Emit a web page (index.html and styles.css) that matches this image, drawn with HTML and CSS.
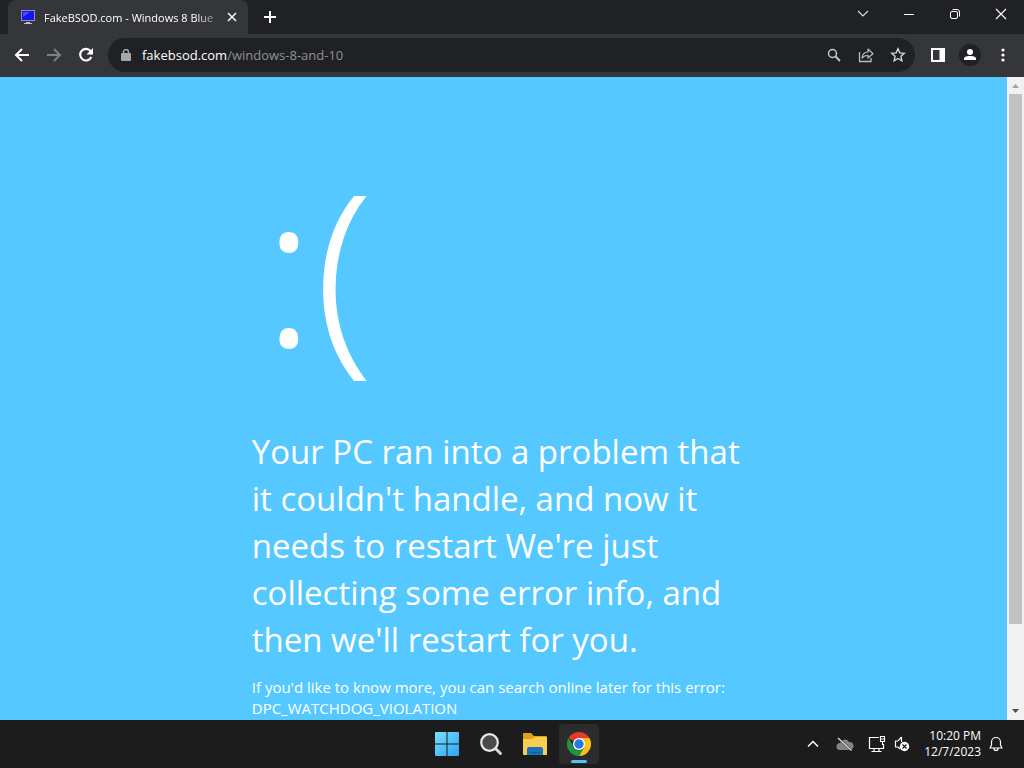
FILE: index.html
```
<!DOCTYPE html>
<html lang="en">
<head>
<meta charset="utf-8">
<meta name="viewport" content="width=device-width, initial-scale=1">
<title>FakeBSOD.com - Windows 8 Blue Screen</title>
<link rel="stylesheet" href="styles.css">
</head>
<body>
<header class="browser">
  <div class="tabstrip">
    <div class="tab">
      <svg class="favicon" width="16" height="16" viewBox="0 0 16 16"><rect x="1" y="1" width="14" height="11" fill="#8d8dd0"/><rect x="2" y="2" width="12" height="9" fill="#1616e8"/><path d="M3 3h7L3 8z" fill="#4a4af5"/><path d="M6 13h4v1h2v1H4v-1h2z" fill="#c4c4c4"/></svg>
      <span class="tab-title">FakeBSOD.com - Windows 8 Blue</span>
      <button class="tab-close" aria-label="Close tab"><svg width="10" height="10" viewBox="0 0 10 10"><path d="M1 1l8 8M9 1L1 9" stroke="#f1f3f4" stroke-width="1.6"/></svg></button>
    </div>
    <button class="new-tab" aria-label="New tab"><svg width="14" height="14" viewBox="0 0 14 14"><path d="M7 1v12M1 7h12" stroke="#fff" stroke-width="2"/></svg></button>
    <div class="window-controls">
      <button aria-label="Search tabs"><svg width="12" height="8" viewBox="0 0 12 8"><path d="M1 1l5 5 5-5" fill="none" stroke="#e2e2e2" stroke-width="1.1"/></svg></button>
      <button aria-label="Minimize"><svg width="12" height="12" viewBox="0 0 12 12"><path d="M1 6.500h10" stroke="#fff"/></svg></button>
      <button aria-label="Restore"><svg width="12" height="12" viewBox="0 0 12 12"><rect x="1.500" y="3.500" width="7" height="7" rx="1.500" fill="none" stroke="#fff"/><path d="M3.500 1.500h4.500a2.500 2.500 0 0 1 2.500 2.500v4.500" fill="none" stroke="#fff"/></svg></button>
      <button aria-label="Close"><svg width="12" height="12" viewBox="0 0 12 12"><path d="M1 1l10 10M11 1L1 11" stroke="#fff" stroke-width="1.1"/></svg></button>
    </div>
  </div>
  <div class="toolbar">
    <nav class="nav-buttons">
      <button aria-label="Back"><svg width="16" height="16" viewBox="0 0 16 16"><path d="M8 2L2 8l6 6M2 8h13" fill="none" stroke="#fff" stroke-width="2"/></svg></button>
      <button aria-label="Forward" disabled><svg width="16" height="16" viewBox="0 0 16 16"><path d="M8 2l6 6-6 6M14 8H1" fill="none" stroke="#7d7f82" stroke-width="2"/></svg></button>
      <button aria-label="Reload"><svg width="16" height="16" viewBox="0 0 16 16"><path d="M13.300 10A5.800 5.800 0 1 1 12.500 4" fill="none" stroke="#fff" stroke-width="2.100"/><path d="M15 1v6.500H8.500z" fill="#fff"/></svg></button>
    </nav>
    <div class="omnibox">
      <svg class="lock" width="10" height="12" viewBox="0 0 10 12"><rect x="0" y="4" width="10" height="8" rx="1" fill="#a4a6a9"/><path d="M2.500 5V3a2.500 2.500 0 0 1 5 0v2" fill="none" stroke="#a4a6a9" stroke-width="1.400"/></svg>
      <a class="url" href="#"><span class="host">fakebsod.com</span>/windows-8-and-10</a>
      <button aria-label="Zoom"><svg width="16" height="16" viewBox="0 0 16 16"><circle cx="6.500" cy="6.500" r="4" fill="none" stroke="#c8cacc" stroke-width="1.500"/><path d="M9.500 9.500l4.500 4.500" stroke="#c8cacc" stroke-width="1.800"/></svg></button>
      <button aria-label="Share"><svg width="16" height="16" viewBox="0 0 16 16"><path d="M1.500 5v9.500h11.500V11" fill="none" stroke="#b8babd" stroke-width="1.300"/><path d="M4 11c.3-4 2.500-5.800 6-6V2l5 4.700-5 4.300V8.300C7.500 8.300 5.700 9 4 11z" fill="none" stroke="#b8babd" stroke-width="1.200" stroke-linejoin="round"/></svg></button>
      <button aria-label="Bookmark"><svg width="16" height="16" viewBox="0 0 16 16"><path d="M8 1.800l1.850 4.100 4.450.45-3.350 3 .95 4.400L8 11.500l-3.900 2.250.95-4.400-3.350-3 4.450-.45z" fill="none" stroke="#d2d4d6" stroke-width="1.400"/></svg></button>
    </div>
    <div class="actions">
      <button aria-label="Side panel"><svg width="14" height="14" viewBox="0 0 14 14"><path fill="#fff" fill-rule="evenodd" d="M0 0h14v14H0zM2 2v10h6.500V2z"/></svg></button>
      <button class="avatar" aria-label="Profile"><svg width="12" height="14" viewBox="0 0 12 14"><circle cx="6" cy="4" r="3" fill="#fff"/><path d="M0 12v-1.500C0 8.500 4 8 6 8s6 .5 6 2.500V12z" fill="#fff"/></svg></button>
      <button aria-label="Menu"><svg width="4" height="14" viewBox="0 0 4 14"><g fill="#fff"><circle cx="2" cy="2" r="1.600"/><circle cx="2" cy="7" r="1.600"/><circle cx="2" cy="12" r="1.600"/></g></svg></button>
    </div>
  </div>
</header>
<div class="viewport">
  <main class="bsod">
    <div class="content">
      <div class="face">:(</div>
      <h1 class="message">Your PC ran into a problem that it couldn't handle, and now it needs to restart We're just collecting some error info, and then we'll restart for you.</h1>
      <p class="details">If you'd like to know more, you can search online later for this error: DPC_WATCHDOG_VIOLATION</p>
    </div>
  </main>
  <div class="scrollbar">
    <svg class="arrow" width="17" height="17" viewBox="0 0 17 17"><path d="M5 11l3.500-4 3.500 4z" fill="#a3a3a3"/></svg>
    <div class="track"><div class="thumb"></div></div>
    <svg class="arrow" width="17" height="17" viewBox="0 0 17 17"><path d="M5 6l3.500 4L12 6z" fill="#505050"/></svg>
  </div>
</div>
<footer class="taskbar">
  <div class="side"></div>
  <div class="apps">
    <button aria-label="Start"><svg width="24" height="24" viewBox="0 0 24 24"><defs><linearGradient id="win" x1="0" y1="0" x2="1" y2="1" gradientUnits="objectBoundingBox"><stop offset="0" stop-color="#7adfff"/><stop offset="1" stop-color="#2ba5ee"/></linearGradient></defs><path fill="url(#win)" d="M1 0h10.500v11.500H0V1a1 1 0 0 1 1-1zM12.500 0H23a1 1 0 0 1 1 1v10.500H12.500zM0 12.500h11.500V24H1a1 1 0 0 1-1-1zM12.500 12.500H24V23a1 1 0 0 1-1 1H12.500z"/></svg></button>
    <button aria-label="Search"><svg width="24" height="24" viewBox="0 0 24 24"><path d="M16.500 16.500l5 5" stroke="#d8d8d8" stroke-width="3" stroke-linecap="round"/><circle cx="10.500" cy="10.500" r="8.300" fill="#4b4b4b" stroke="#e8e8e8" stroke-width="2.200"/></svg></button>
    <button aria-label="File Explorer"><svg width="26" height="24" viewBox="0 0 26 24"><path d="M1 2a1 1 0 0 1 1-1h7l3 3h12a1 1 0 0 1 1 1v5H1z" fill="#dfa11c"/><path d="M1 7h9l3-2h11a1 1 0 0 1 1 1v16a1 1 0 0 1-1 1H2a1 1 0 0 1-1-1z" fill="#f8cd50"/><path d="M5 23v-6a2 2 0 0 1 2-2h12a2 2 0 0 1 2 2v6z" fill="#1673bd"/><path d="M8 20h10v1H8z" fill="#0f5d9e"/></svg></button>
    <button class="active" aria-label="Chrome"><svg width="24" height="24" viewBox="0 0 24 24"><path fill="#e33b2e" d="M12 12L1.600 6A12 12 0 0 1 22.400 6z"/><path fill="#fbc116" d="M12 12V6h10.400A12 12 0 0 1 12 24l5.200-9z"/><path fill="#229342" d="M12 12l5.200 3L12 24A12 12 0 0 1 1.600 6l5.200 9z"/><circle cx="12" cy="12" r="6" fill="#fff"/><circle cx="12" cy="12" r="4.700" fill="#2677e8"/></svg></button>
  </div>
  <div class="side tray">
    <button aria-label="Show hidden icons"><svg width="12" height="8" viewBox="0 0 12 8"><path d="M1 6.500l5-5 5 5" fill="none" stroke="#fff" stroke-width="1.500"/></svg></button>
    <button aria-label="OneDrive"><svg width="18" height="16" viewBox="0 0 18 16"><path d="M4 14a3.500 3.500 0 0 1 0-7 5 5 0 0 1 9-1 4 4 0 0 1 1 8z" fill="#858585"/><path d="M2 2l13 12" stroke="#1c1c1c" stroke-width="2"/><path d="M2 2l13.500 12.500" stroke="#e5e5e5" stroke-width="1.200"/></svg></button>
    <button aria-label="Network"><svg width="18" height="18" viewBox="0 0 18 18"><path d="M11 2.500H1.500v11h14V9M6 14v2.500M11 14v2.500M3.500 16.500h10" fill="none" stroke="#fff" stroke-width="1.200"/><path d="M12.500 1.500h4v5h-4zM12.500 4h4M14.500 6.500V10" fill="none" stroke="#fff" stroke-width="1.100"/></svg></button>
    <button aria-label="Volume muted"><svg width="16" height="16" viewBox="0 0 16 16"><path d="M7.500 1L4 5H1.500v6H4l2 2M7.500 1v5" fill="none" stroke="#fff" stroke-width="1.200"/><circle cx="10.500" cy="10.500" r="4.700" fill="#fff"/><path d="M8.500 8.500l4 4M12.500 8.500l-4 4" stroke="#1c1c1c" stroke-width="1.200"/></svg></button>
    <time class="clock" datetime="2023-12-07T22:20"><span>10:20 PM</span><span>12/7/2023</span></time>
    <button aria-label="Notifications"><svg width="14" height="16" viewBox="0 0 14 16"><path d="M1 12l1.500-3V6a4.500 4.500 0 0 1 9 0v3L13 12zM5 12.500a2 2 0 0 0 4 0" fill="none" stroke="#fff" stroke-width="1.200" stroke-linejoin="round"/></svg></button>
  </div>
</footer>
</body>
</html>
```
FILE: styles.css
```
* { box-sizing: border-box; }
body {
  margin: 0;
  height: 100vh;
  display: flex;
  flex-direction: column;
  overflow: hidden;
  font-family: "Open Sans", "Noto Sans", sans-serif;
  font-size: 12px;
  color: #fff;
}
button {
  display: flex;
  align-items: center;
  justify-content: center;
  flex: none;
  border: 0;
  padding: 0;
  background: none;
}
svg { display: block; flex: none; }

.tabstrip {
  display: flex;
  height: 34px;
  padding-left: 8px;
  background: #202124;
}
.tab {
  display: flex;
  align-items: center;
  width: 240px;
  padding: 0 11px 0 12px;
  border-radius: 8px 8px 0 0;
  background: #35363a;
}
.tab-title {
  flex: 1;
  margin-left: 8px;
  overflow: hidden;
  white-space: nowrap;
  font-size: 11px;
  mask-image: linear-gradient(to right, #000 86%, transparent 104%);
}
.tab-close { margin-left: 8px; }
.new-tab { width: 28px; margin-left: 8px; }
.window-controls {
  display: flex;
  height: 28px;
  margin-left: auto;
}
.window-controls button { width: 46px; }

.toolbar {
  display: flex;
  align-items: center;
  height: 43px;
  padding: 0 5px 1px 6px;
  background: #35363a;
}
.nav-buttons { display: flex; margin-right: 6px; }
.nav-buttons button { width: 32px; height: 32px; }
.omnibox {
  display: flex;
  align-items: center;
  flex: 1;
  height: 34px;
  padding: 0 1px 0 13px;
  border-radius: 17px;
  background: #202124;
}
.omnibox button { width: 32px; height: 32px; }
.url {
  flex: 1;
  margin-left: 11px;
  color: #8f9194;
  font-size: 13px;
  text-decoration: none;
}
.host { color: #fff; }
.actions { display: flex; align-items: center; margin-left: 7px; }
.actions button { width: 32px; height: 22px; }
.actions .avatar {
  width: 22px;
  margin: 0 6px 0 5px;
  border-radius: 50%;
  background: #202124;
}

.viewport { display: flex; flex: 1; min-height: 0; }
.bsod {
  flex: 1;
  overflow: hidden;
  background: #55c9ff;
}
.content { width: 50%; margin: 0 auto; }
.face {
  height: 351px;
  padding-left: 11px;
  font-family: "Noto Sans", sans-serif;
  font-size: 212px;
  font-weight: 350;
  line-height: 376px;
}
.message {
  margin: 0;
  font-size: 33px;
  font-weight: 400;
  line-height: 47px;
}
.details {
  margin: 14px 0 0;
  font-size: 15px;
  line-height: 21px;
}
.scrollbar {
  display: flex;
  flex-direction: column;
  width: 17px;
  background: #f1f1f1;
}
.track { flex: 1; padding: 0 2px; }
.thumb { height: 87%; background: #c1c1c1; }

.taskbar {
  display: flex;
  align-items: center;
  height: 48px;
  background: #1c1c1c;
}
.side { flex: 1; padding: 0 21px; }
.side:first-child { padding-right: 23px; }
.apps { display: flex; gap: 4px; }
.apps button { width: 40px; height: 40px; border-radius: 4px; }
.apps .active { position: relative; background: #2c2c2c; }
.apps .active::after {
  content: "";
  position: absolute;
  bottom: 1px;
  left: 12px;
  width: 16px;
  height: 3px;
  border-radius: 2px;
  background: #4cc2ff;
}
.tray {
  display: flex;
  align-items: center;
  justify-content: flex-end;
}
.tray button { margin-right: 10px; }
.tray button:first-child { margin-right: 17px; }
.tray button:nth-child(2) { margin-right: 14px; }
.tray button:nth-child(3) { margin-right: 8px; }
.tray button:nth-child(4) { margin-right: 14px; }
.tray button:last-child { margin: 0 0 0 8px; }
.clock {
  display: flex;
  flex-direction: column;
  text-align: right;
  line-height: 16px;
}
```
